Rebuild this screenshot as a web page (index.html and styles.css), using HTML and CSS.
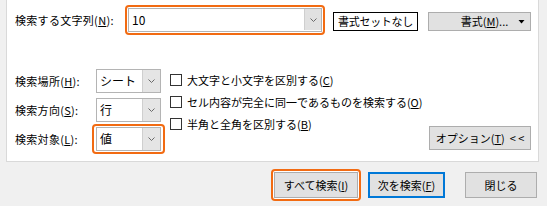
FILE: index.html
```html
<!DOCTYPE html>
<html lang="ja">
<head>
<meta charset="utf-8">
<link rel="stylesheet" href="styles.css">
</head>
<body>
<div class="dialog">
  <div class="panel">
    <div class="row-find">
      <label class="lbl-find">検索する文字列(<u>N</u>):</label>
      <div class="hl hl-find">
        <div class="combo">
          <span class="combo-text">10</span>
          <span class="combo-btn"><svg width="9" height="6" viewBox="0 0 9 6"><polyline points="1.5,1.5 4.5,4.5 7.5,1.5" fill="none" stroke="#6a6a6a" stroke-width="1"/></svg></span>
        </div>
      </div>
      <div class="preview">書式セットなし</div>
      <div class="btn btn-format"><span class="fmt-text">書式(<u>M</u>)...</span><svg class="caret" width="7" height="4" viewBox="0 0 7 4"><polygon points="0.5,0 6.5,0 3.5,3.5" fill="#000"/></svg></div>
    </div>
    <div class="row-opts">
      <div class="fields">
        <div class="field">
          <label class="lbl">検索場所(<u>H</u>):</label>
          <div class="select"><span class="sel-text">シート</span><span class="sel-btn"><svg width="9" height="6" viewBox="0 0 9 6"><polyline points="1.5,1.5 4.5,4.5 7.5,1.5" fill="none" stroke="#6a6a6a" stroke-width="1"/></svg></span></div>
        </div>
        <div class="field">
          <label class="lbl">検索方向(<u>S</u>):</label>
          <div class="select"><span class="sel-text">行</span><span class="sel-btn"><svg width="9" height="6" viewBox="0 0 9 6"><polyline points="1.5,1.5 4.5,4.5 7.5,1.5" fill="none" stroke="#6a6a6a" stroke-width="1"/></svg></span></div>
        </div>
        <div class="field">
          <label class="lbl">検索対象(<u>L</u>):</label>
          <div class="hl hl-sel">
            <div class="select"><span class="sel-text">値</span><span class="sel-btn"><svg width="9" height="6" viewBox="0 0 9 6"><polyline points="1.5,1.5 4.5,4.5 7.5,1.5" fill="none" stroke="#6a6a6a" stroke-width="1"/></svg></span></div>
          </div>
        </div>
      </div>
      <div class="checks">
        <div class="check"><span class="box"></span><span>大文字と小文字を区別する(<u>C</u>)</span></div>
        <div class="check"><span class="box"></span><span>セル内容が完全に同一であるものを検索する(<u>O</u>)</span></div>
        <div class="check"><span class="box"></span><span>半角と全角を区別する(<u>B</u>)</span></div>
      </div>
      <div class="btn btn-options">オプション(<u>T</u>)&nbsp; &lt;&nbsp;&lt;</div>
    </div>
  </div>
  <div class="footer">
    <div class="hl hl-btn"><div class="btn btn-foot">すべて検索(<u>I</u>)</div></div>
    <div class="btn btn-foot btn-default">次を検索(<u>F</u>)</div>
    <div class="btn btn-foot btn-close">閉じる</div>
  </div>
</div>
</body>
</html>
```

FILE: styles.css
```css
html, body {
  margin: 0;
  padding: 0;
}
body {
  background: #f0f0f0;
  font-family: "Noto Sans CJK JP", "Noto Sans", sans-serif;
  font-size: 11px;
  color: #000;
  width: 547px;
  height: 206px;
  overflow: hidden;
}
u {
  text-decoration: underline;
  text-underline-offset: 1px;
}
.dialog {
  display: flex;
  flex-direction: column;
}
.panel {
  margin-left: 6px;
  width: 533px;
  height: 162px;
  box-sizing: border-box;
  background: #fff;
  border: 1px solid #d9d9d9;
  border-top: none;
  padding: 5px 0 0 8px;
}
.row-find {
  display: flex;
  align-items: flex-start;
}
.lbl-find {
  width: 110px;
  line-height: 30px;
  white-space: nowrap;
  letter-spacing: 0.3px;
}
.hl {
  border: 2px solid #f26b12;
  border-radius: 4px;
  background: #fff;
}
.hl-find {
  width: 200px;
  height: 30px;
  box-sizing: border-box;
  padding: 1px;
}
.combo {
  display: flex;
  height: 24px;
  box-sizing: border-box;
  border: 1px solid #b4b4b4;
  background: #fff;
}
.combo-text {
  flex: 1;
  padding-left: 3px;
  line-height: 22px;
  font-size: 12px;
}
.combo-btn {
  width: 16px;
  margin: 0 0 1px 0;
  background: #e1e1e1;
  border-left: 1px solid #cfcfcf;
  display: flex;
  align-items: center;
  justify-content: center;
}
.preview {
  margin: 7px 0 0 8px;
  width: 85px;
  height: 19px;
  box-sizing: border-box;
  border: 1px solid #000;
  text-align: center;
  line-height: 17px;
  white-space: nowrap;
  letter-spacing: -0.3px;
}
.btn {
  box-sizing: border-box;
  background: #e1e1e1;
  border: 1px solid #adadad;
  white-space: nowrap;
  text-align: center;
}
.btn-format {
  margin: 7px 0 0 10px;
  width: 103px;
  height: 19px;
  display: flex;
  align-items: center;
  padding: 0 5px 0 22px;
}
.fmt-text {
  flex: 1;
  line-height: 17px;
}
.caret {
  display: block;
}
.row-opts {
  display: flex;
  margin-top: 34px;
  padding-right: 7px;
}
.fields {
  display: flex;
  flex-direction: column;
  gap: 5px;
}
.field {
  display: flex;
  align-items: center;
  height: 24px;
}
.lbl {
  width: 81px;
  white-space: nowrap;
  letter-spacing: 0.3px;
}
.select {
  width: 65px;
  height: 24px;
  box-sizing: border-box;
  border: 1px solid #b4b4b4;
  background: #fff;
  display: flex;
}
.sel-text {
  flex: 1;
  padding-left: 3px;
  line-height: 22px;
  font-size: 12px;
}
.sel-btn {
  width: 17px;
  background: #e5e5e5;
  border-left: 1px solid #cfcfcf;
  display: flex;
  align-items: center;
  justify-content: center;
}
.hl-sel {
  margin: -3px -4px;
  padding: 1px 2px;
}
.checks {
  margin-left: 9px;
  display: flex;
  flex-direction: column;
}
.check {
  display: flex;
  align-items: center;
  height: 22px;
  white-space: nowrap;
}
.box {
  width: 12px;
  height: 12px;
  box-sizing: border-box;
  border: 1px solid #333;
  background: #fff;
  margin-right: 5px;
}
.btn-options {
  margin-left: auto;
  align-self: flex-end;
  margin-bottom: 1px;
  width: 102px;
  height: 24px;
  line-height: 22px;
}
.footer {
  display: flex;
  justify-content: flex-end;
  align-items: center;
  padding: 7px 10px 0 0;
}
.btn-foot {
  height: 26px;
  line-height: 24px;
}
.hl-btn {
  padding: 1px;
  margin-right: 7px;
}
.hl-btn .btn-foot {
  width: 84px;
}
.btn-default {
  width: 77px;
  border: 2px solid #0078d7;
  line-height: 22px;
}
.btn-close {
  margin-left: 20px;
  width: 72px;
}
```
